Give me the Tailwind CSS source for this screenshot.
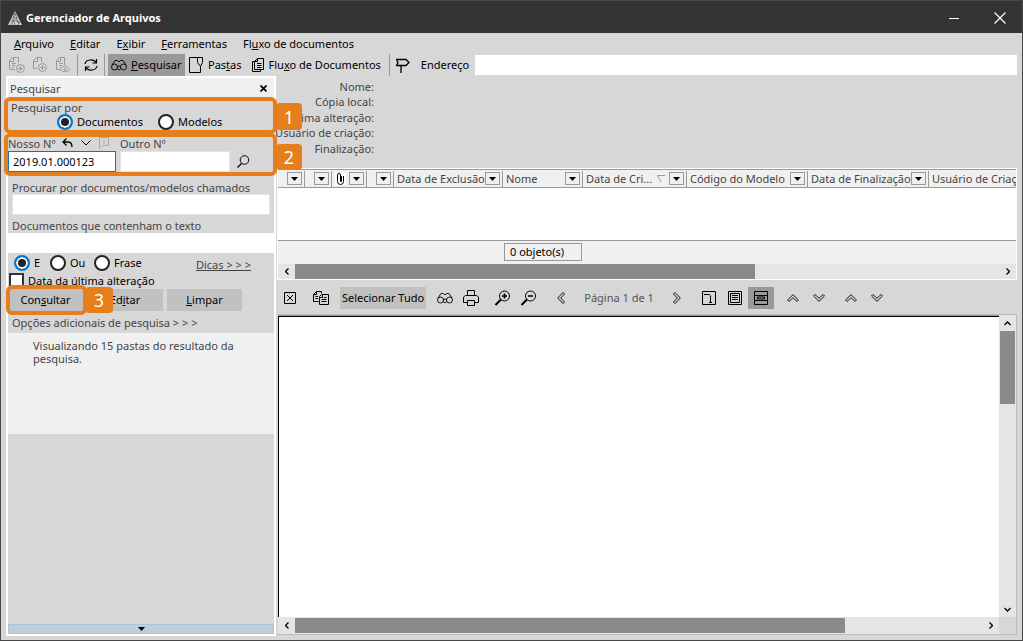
<!DOCTYPE html>
<html lang="pt-BR">
<head>
<meta charset="utf-8">
<title>Gerenciador de Arquivos</title>
<script src="https://cdn.jsdelivr.net/npm/@tailwindcss/browser@4"></script>
</head>
<body class="flex h-screen flex-col overflow-hidden border border-[#484848] bg-[#d7d7d7] font-['Noto_Sans',sans-serif] text-[11px] leading-4 text-black">
<svg class="hidden" aria-hidden="true">
  <symbol id="bino" viewBox="0 0 16 12"><g fill="none" stroke="currentColor" stroke-width=".9"><circle cx="3.500" cy="8" r="3"/><circle cx="12.500" cy="8" r="3"/><path d="M6.500 8.500a1.500 1.500 0 0 1 3 0M6.500 9.500a1.500 1.200 0 0 0 3 0M1 6l3-4.500h2.500L8 3l1.500-1.500H12L15 6"/></g></symbol>
  <symbol id="docs" viewBox="0 0 16 14"><path fill="none" stroke="currentColor" d="M5.500 10.500H.5v-7l3-3H8.500v2M3.500.5v3h-3M2.500 5.500H5M2.500 7.500H5M6.500 5.500l2-2H15.500v10H6.500zM9.500 3.500v3h-3M8.500 8.500h5M8.500 10.500h5M11 6.500h2.500"/></symbol>
  <symbol id="flow" viewBox="0 0 12 14"><path fill="none" stroke="currentColor" d="M2.500 3.500h-2v10h8v-2M5.500.5h6v11h-9v-8zM5.500.5v3h-3M5 5.500h4.500M5 7.500h4.500M5 9.500h4.500"/></symbol>
  <symbol id="adddoc" viewBox="0 0 16 16"><g fill="none" stroke="currentColor"><path d="M6 12.500H.5v-9l3-3h6V6M4.500.5v4h-4M3 6.500h4M3 8.500h3M3 10.500h2M11.500 9v5M9 11.500h5"/><circle cx="11.500" cy="11.500" r="4"/></g></symbol>
  <symbol id="addpage" viewBox="0 0 16 16"><g fill="none" stroke="currentColor"><path d="M5 11.500H1.500v-8l3-3h5V5M5.500.5v4h-4M10.500 8v5M8 10.500h5"/><circle cx="10.500" cy="10.500" r="4"/></g></symbol>
  <symbol id="viewdoc" viewBox="0 0 16 16"><g fill="none" stroke="currentColor"><path d="M5 12.500H1.500v-9l3-3h5V8M5.500.5v4h-4M4 6.500h4M4 8.500h3M5 12.500c2-4 7-4 10 0c-3 3-7 3-10 0z"/><circle cx="10" cy="12.500" r="1"/></g></symbol>
  <symbol id="lens" viewBox="0 0 16 16"><g fill="none" stroke="currentColor"><circle cx="9.500" cy="6" r="5"/><path stroke-width="2" d="M6 9.500L.5 15"/></g></symbol>
  <symbol id="up" viewBox="0 0 12 8"><path fill="none" stroke="currentColor" stroke-width=".9" d="M.5 6L6 .7L11.500 6L10 7.500L6 3.700L2 7.500z"/></symbol>
  <symbol id="down" viewBox="0 0 12 8"><path fill="none" stroke="currentColor" stroke-width=".9" d="M.5 2L6 7.300L11.500 2L10 .5L6 4.300L2 .5z"/></symbol>
  <symbol id="drop" viewBox="0 0 7 4"><path fill="currentColor" d="M0 0h7L3.500 4z"/></symbol>
</svg>

<header class="flex h-8 shrink-0 items-center bg-[#333] pt-[2px] pl-[7px] text-white">
  <svg class="size-[14px]" viewBox="0 0 14 14"><path fill="#d0d0d0" d="M7 0L14 14H0z"/><path stroke="#333" stroke-width=".6" fill="none" d="M7 2L5 8l2 6M7 2l3 9M3 10l4-1 5 3M5 6l4 2M3 14l2-4M10 14l1-4"/></svg>
  <h1 class="ml-1 flex-1 font-bold">Gerenciador de Arquivos</h1>
  <button class="flex h-8 w-[46px] items-center justify-center" aria-label="Minimizar"><span class="h-px w-[10px] bg-white"></span></button>
  <button class="flex h-8 w-[45px] items-center justify-center" aria-label="Fechar"><svg class="size-3" viewBox="0 0 12 12"><path stroke="#fff" stroke-width="1.200" d="M.5.5l11 11M11.500.5l-11 11"/></svg></button>
</header>

<nav class="flex h-[21px] shrink-0 items-center gap-4 pl-[13px]">
  <a href="#"><u>A</u>rquivo</a><a href="#"><u>E</u>ditar</a><a href="#">E<u>x</u>ibir</a><a href="#"><u>F</u>erramentas</a><a href="#">Fl<u>u</u>xo de documentos</a>
</nav>

<div class="flex h-[22px] shrink-0 items-center pr-[5px]">
  <div class="flex gap-[7px] pl-2 text-[#999]">
    <button aria-label="Adicionar documento"><svg class="size-4"><use href="#adddoc"/></svg></button>
    <button aria-label="Adicionar página"><svg class="size-4"><use href="#addpage"/></svg></button>
    <button aria-label="Visualizar documento"><svg class="size-4"><use href="#viewdoc"/></svg></button>
  </div>
  <div class="ml-[6px] flex h-full w-[28px] items-center justify-center border-x border-[#999]">
    <button aria-label="Atualizar"><svg class="h-3 w-[14px]" viewBox="0 0 14 12"><path fill="none" stroke="#000" stroke-width="1.200" d="M1 5C2 0 9 0 12 3M12.500 0v4h-4M13 7c-1 5-8 5-11 2M1.500 12V8h4"/></svg></button>
  </div>
  <button class="ml-[3px] flex h-full w-[77px] items-center gap-1 bg-[#999] pl-[3px]"><svg class="h-3 w-4 shrink-0"><use href="#bino"/></svg><span><u>P</u>esquisar</span></button>
  <button class="ml-1 flex items-center gap-[5px]"><svg class="h-4 w-[14px]" viewBox="0 0 14 16"><path fill="none" stroke="#000" d="M8.500.5h-8v15h11v-6M8.500.5h5v5l-2 4-3-4z"/></svg><span>Pas<u>t</u>as</span></button>
  <button class="ml-[10px] flex items-center gap-[5px]"><svg class="h-[14px] w-3"><use href="#flow"/></svg><span>Flu<u>x</u>o de Documentos</span></button>
  <div class="ml-2 flex h-full flex-1 items-center border-l border-[#999] pl-[6px]">
    <svg class="h-[15px] w-[14px]" viewBox="0 0 14 15"><path fill="none" stroke="#000" stroke-width="1.300" d="M5 15V7.500M.6 1.500H10l3 3-3 3H.6l1.400-3z"/></svg>
    <label for="end" class="mr-[6px] ml-[11px]">Endereço</label>
    <input id="end" class="h-5 min-w-0 flex-1 bg-white px-1 outline-none">
  </div>
</div>

<main class="flex min-h-0 flex-1 pr-[5px] pl-[5px] text-[#444]">
  <aside class="mb-1 flex w-[270px] shrink-0 flex-col border-2 border-white">
    <div class="flex h-5 shrink-0 items-center justify-between bg-[#f0f0f0] pt-px pr-[7px] pl-[2px]"><h2>Pesquisar</h2><button aria-label="Fechar painel"><svg class="size-[7px]" viewBox="0 0 7 7"><path stroke="#000" stroke-width="1.700" d="M.5.5l6 6M6.500.5l-6 6"/></svg></button></div>

    <div role="radiogroup" aria-labelledby="por" class="relative h-9 shrink-0 pt-[2px] pl-[3px] text-black">
      <p id="por" class="h-[14px] text-[#444]">Pesquisar por</p>
      <div class="flex pl-[46px]">
        <label class="flex w-[101px] items-center gap-1"><input type="radio" name="tipo" checked class="size-4 appearance-none rounded-full border-2 border-[#222] bg-white checked:border-[#0078d7] checked:bg-[#222] checked:shadow-[inset_0_0_0_2px_white]">Documentos</label>
        <label class="flex items-center gap-1"><input type="radio" name="tipo" class="size-4 appearance-none rounded-full border-2 border-[#222] bg-white checked:border-[#0078d7] checked:bg-[#222] checked:shadow-[inset_0_0_0_2px_white]">Modelos</label>
      </div>
      <span class="absolute -top-px -right-[3px] bottom-0 -left-1 z-10 rounded-md border-4 border-[#e67e1b]"></span>
      <span class="absolute top-[5px] left-[268px] z-10 flex h-[27px] w-[26px] items-center justify-center rounded-sm bg-[#e67e1b] text-lg text-white">1</span>
    </div>

    <section class="relative h-[42px] shrink-0">
      <div class="flex h-[17px] items-center">
        <label for="nosso" class="w-[54px] pt-[2px]">Nosso Nº</label>
        <svg class="mr-2 h-[10px] w-[11px]" viewBox="0 0 11 10"><path fill="none" stroke="#000" stroke-width="1.300" d="M4.500.5L1 4l3.500 3.500M1 4h5c3 0 4 2 4 5"/></svg>
        <svg class="mr-2 h-[6px] w-[10px]" viewBox="0 0 10 6"><path fill="none" stroke="#000" d="M.5.5L5 5L9.500.5"/></svg>
        <svg class="mr-[11px] h-3 w-[10px]" viewBox="0 0 10 12"><path fill="none" stroke="#aaa" d="M.5.5h9v8h-6l-3 3zM5 2v1.500M5 4.500V7"/></svg>
        <label for="outro" class="pt-[2px]">Outro Nº</label>
      </div>
      <div class="flex">
        <input id="nosso" value="2019.01.000123" class="h-[21px] w-[108px] border border-[#0078d7] bg-white pl-1 text-[11px] text-black outline-none">
        <input id="outro" class="ml-1 h-[21px] w-[110px] border border-[#e5e5e5] bg-white px-1 outline-none">
        <button class="ml-[7px] text-black" aria-label="Procurar"><svg class="size-[13px]" viewBox="0 0 13 13"><circle cx="7.500" cy="5" r="4.300" fill="none" stroke="#000"/><path stroke="#000" stroke-width="1.300" d="M4.500 8.500L.5 12.500"/></svg></button>
      </div>
      <span class="absolute -top-px -right-[3px] bottom-0 -left-1 z-10 rounded-md border-4 border-[#e67e1b]"></span>
      <span class="absolute top-[10px] left-[268px] z-10 flex h-[26px] w-[26px] items-center justify-center rounded-sm bg-[#e67e1b] text-lg text-white">2</span>
    </section>

    <div class="flex flex-col pt-1"><label for="nome" class="h-[14px] pl-1">Procurar por documentos/modelos chamados</label><input id="nome" class="mr-1 ml-1 h-[21px] border border-[#e5e5e5] bg-white px-1 outline-none"></div>
    <div class="flex flex-col pt-[3px]"><label for="texto" class="h-[15px] pl-1">Documentos que contenham o texto</label><input id="texto" class="h-5 bg-white px-1 outline-none"></div>

    <div class="flex h-[19px] items-center pl-[6px] text-black">
      <label class="flex w-9 items-center gap-1"><input type="radio" name="modo" checked class="size-4 appearance-none rounded-full border-2 border-[#222] bg-white checked:border-[#0078d7] checked:bg-[#222] checked:shadow-[inset_0_0_0_2px_white]">E</label>
      <label class="flex w-11 items-center gap-1"><input type="radio" name="modo" class="size-4 appearance-none rounded-full border-2 border-[#222] bg-white checked:border-[#0078d7] checked:bg-[#222] checked:shadow-[inset_0_0_0_2px_white]">Ou</label>
      <label class="flex flex-1 items-center gap-1"><input type="radio" name="modo" class="size-4 appearance-none rounded-full border-2 border-[#222] bg-white checked:border-[#0078d7] checked:bg-[#222] checked:shadow-[inset_0_0_0_2px_white]">Frase</label>
      <a href="#" class="mr-[23px] pt-1 text-[#444] underline">Dicas &gt; &gt; &gt;</a>
    </div>
    <label class="flex h-[17px] items-center gap-1 pl-px text-black"><input type="checkbox" class="size-[15px] appearance-none border-2 border-[#333] bg-white checked:bg-[#333]">Data da última alteração</label>

    <div class="flex h-[22px] gap-1 text-black">
      <div class="relative flex">
        <button class="w-[75px] bg-[#c1c1c1]">Con<u>s</u>ultar</button>
        <span class="absolute -top-1 -right-1 -bottom-1 -left-[2px] z-10 rounded-md border-4 border-[#e67e1b]"></span>
        <span class="absolute -top-[2px] left-[77px] z-10 flex h-[26px] w-7 items-center justify-center rounded-sm bg-[#e67e1b] text-lg text-white">3</span>
      </div>
      <button class="w-[76px] bg-[#c1c1c1]">Ed<u>i</u>tar</button>
      <button class="w-[75px] bg-[#c1c1c1]"><u>L</u>impar</button>
    </div>
    <a href="#" class="h-[22px] pt-1 pl-1">Opções adicionais de pesquisa &gt; &gt; &gt;</a>
    <p class="h-[101px] bg-[#f0f0f0] pt-[6px] pr-9 pl-[25px] leading-[13px]">Visualizando 15 pastas do resultado da pesquisa.</p>
    <button class="mt-auto flex h-[10px] shrink-0 items-center justify-center border border-[#a8c4dc] bg-[#c0cdd9] text-black" aria-label="Mais"><svg class="h-1 w-[7px]"><use href="#drop"/></svg></button>
  </aside>

  <div class="ml-px flex min-w-0 flex-1 flex-col">
    <dl class="flex h-[92px] w-[97px] shrink-0 flex-col items-end pt-[3px] whitespace-nowrap">
      <dt class="h-[15px]">Nome:</dt><dt class="h-4">Cópia local:</dt><dt class="h-[15px]">Última alteração:</dt><dt class="h-4">Usuário de criação:</dt><dt class="h-4">Finalização:</dt>
    </dl>

    <section class="h-[112px] shrink-0 overflow-hidden border border-white bg-white">
      <div class="overflow-hidden">
      <table class="w-[860px] table-fixed border-collapse text-left">
        <colgroup><col class="w-[27px]"><col class="w-[27px]"><col class="w-[35px]"><col class="w-[27px]"><col class="w-[109px]"><col class="w-[80px]"><col class="w-[104px]"><col class="w-[121px]"><col class="w-[121px]"><col></colgroup>
        <thead><tr class="h-[18px] border-y border-[#999] bg-[#f0f0f0] whitespace-nowrap [&_button]:flex [&_button]:h-[13px] [&_button]:w-[15px] [&_button]:shrink-0 [&_button]:items-center [&_button]:justify-center [&_button]:border [&_button]:border-[#999] [&_button]:text-black [&_div]:flex [&_div]:h-4 [&_div]:items-center [&_div]:justify-between [&_div]:border-r [&_div]:border-[#999] [&_div]:pr-[2px] [&_div]:pl-[3px] [&_th]:overflow-hidden [&_th]:p-0 [&_th]:font-normal">
          <th><div><span></span><button aria-label="Filtrar"><svg class="h-1 w-[7px]"><use href="#drop"/></svg></button></div></th>
          <th><div><span></span><button aria-label="Filtrar"><svg class="h-1 w-[7px]"><use href="#drop"/></svg></button></div></th>
          <th><div><svg class="h-3 w-[11px] bg-white" viewBox="0 0 11 12"><path fill="none" stroke="#000" d="M2.500 3v5.500a3 3 0 0 0 6 0V3M2.500 3V2a1.500 1.500 0 0 1 3 0v6.500M5.500 8.500a1 1 0 0 0 1 0V3"/></svg><button aria-label="Filtrar"><svg class="h-1 w-[7px]"><use href="#drop"/></svg></button></div></th>
          <th><div><span></span><button aria-label="Filtrar"><svg class="h-1 w-[7px]"><use href="#drop"/></svg></button></div></th>
          <th><div>Data de Exclusão<button aria-label="Filtrar"><svg class="h-1 w-[7px]"><use href="#drop"/></svg></button></div></th>
          <th><div>Nome<button aria-label="Filtrar"><svg class="h-1 w-[7px]"><use href="#drop"/></svg></button></div></th>
          <th><div>Data de Cri...<svg class="h-[7px] w-2" viewBox="0 0 8 7"><path fill="none" stroke="#999" d="M8 .5H.5L4 7"/></svg><button aria-label="Filtrar"><svg class="h-1 w-[7px]"><use href="#drop"/></svg></button></div></th>
          <th><div>Código do Modelo<button aria-label="Filtrar"><svg class="h-1 w-[7px]"><use href="#drop"/></svg></button></div></th>
          <th><div>Data de Finalização<button aria-label="Filtrar"><svg class="h-1 w-[7px]"><use href="#drop"/></svg></button></div></th>
          <th><div>Usuário de Criação<button aria-label="Filtrar"><svg class="h-1 w-[7px]"><use href="#drop"/></svg></button></div></th>
        </tr></thead>
      </table>
      </div>
      <div class="h-[52px]"></div>
      <div class="flex h-6 items-start border-t border-[#999] bg-[#f0f0f0] pt-[2px] pl-[226px]"><output class="h-[18px] w-[78px] border border-[#999] pl-[5px] text-black">0 objeto(s)</output></div>
      <div class="flex h-[15px] items-center bg-[#e5e5e5]">
        <button class="flex w-[17px] justify-center" aria-label="Esquerda"><svg class="h-[7px] w-1" viewBox="0 0 4 7"><path fill="none" stroke="#000" stroke-width="1.300" d="M3.500.5l-3 3 3 3"/></svg></button>
        <div class="h-full flex-1"><div class="h-full w-[65.3%] bg-[#8a8a8a]"></div></div>
        <button class="flex w-[17px] justify-center" aria-label="Direita"><svg class="h-[7px] w-1" viewBox="0 0 4 7"><path fill="none" stroke="#000" stroke-width="1.300" d="M.5.5l3 3-3 3"/></svg></button>
      </div>
    </section>

    <div class="flex h-[34px] shrink-0 items-center gap-[6px] pt-[2px] text-black [&_button]:flex [&_button]:h-[22px] [&_button]:w-[26px] [&_button]:items-center [&_button]:justify-center">
      <div class="-mr-px"><button aria-label="Fechar"><svg class="size-3" viewBox="0 0 12 12"><path fill="none" stroke="#000" d="M.5.5h11v11H.5zM3 3l6 6M9 3l-6 6"/></svg></button></div>
      <button aria-label="Copiar"><svg class="h-[14px] w-4"><use href="#docs"/></svg></button>
      <div class="w-[86px] bg-[#c1c1c1] [&_button]:w-full!"><button class="whitespace-nowrap">Selecionar Tudo</button></div>
      <div class="flex"><button aria-label="Localizar"><svg class="h-3 w-4"><use href="#bino"/></svg></button>
      <button aria-label="Imprimir"><svg class="size-4" viewBox="0 0 16 16"><path fill="none" stroke="#000" d="M4.500 5V.5h7V5M4 12.500H.5V7l2-1.500h11l2 1.500v5.500H12M4.500 10.500h7v5h-7z"/></svg></button></div>
      <div class="flex"><button aria-label="Ampliar"><svg class="size-4" viewBox="0 0 16 16"><use href="#lens"/><path stroke="#000" stroke-width="1.700" d="M7 6h5M9.500 3.500v5"/></svg></button>
      <button aria-label="Reduzir"><svg class="size-4" viewBox="0 0 16 16"><use href="#lens"/><path stroke="#000" stroke-width="1.500" d="M7 6h5"/></svg></button></div>
      <div class="flex items-center"><button aria-label="Anterior"><svg class="h-3 w-2 overflow-visible" viewBox="0 0 8 12"><path fill="none" stroke="#000" stroke-width=".9" d="M6 .5L.7 6L6 11.500L7.500 10L3.700 6L7.500 2z"/></svg></button>
      <span class="w-[90px] text-center whitespace-nowrap text-[#555]">Página 1 de 1</span>
      <button aria-label="Próxima"><svg class="h-3 w-2 overflow-visible" viewBox="0 0 8 12"><path fill="none" stroke="#000" stroke-width=".9" d="M2 .5L7.300 6L2 11.500L.5 10L4.300 6L.5 2z"/></svg></button></div>
      <div class="flex"><button aria-label="Largura da página"><svg class="size-[14px]" viewBox="0 0 14 14"><path fill="none" stroke="#000" d="M.5.5h13v13H.5zM2 3.500h5.500l1 1v7M7 11.500h3"/></svg></button>
      <button aria-label="Página inteira"><svg class="size-[14px]" viewBox="0 0 14 14"><path fill="none" stroke="#000" d="M.5.5h13v13H.5zM2.500 2.500h9v9h-9zM4 4.500h6M4 6.500h6M4 8.500h6"/></svg></button>
      <button class="bg-[#999]" aria-label="Contínuo"><svg class="size-[14px]" viewBox="0 0 14 14"><path fill="none" stroke="#000" d="M.5.5h13v13H.5zM.5 4.500h13M.5 9.500h13M3.500 6h7v2h-7z"/></svg></button></div>
      <div class="flex"><button aria-label="Subir"><svg class="h-2 w-3"><use href="#up"/></svg></button><button aria-label="Descer"><svg class="h-2 w-3"><use href="#down"/></svg></button></div>
      <div class="flex"><button aria-label="Primeiro"><svg class="h-2 w-3"><use href="#up"/></svg></button><button aria-label="Último"><svg class="h-2 w-3"><use href="#down"/></svg></button></div>
    </div>

    <section class="mb-[5px] grid min-h-0 flex-1 grid-cols-[1fr_17px] grid-rows-[1fr_17px] border-t border-r border-b border-[#bbb] pl-px">
      <div class="border-t border-[#999] bg-white"><div class="h-full border-t border-l border-black"></div></div>
      <div class="flex flex-col items-center bg-[#e5e5e5]">
        <button class="flex h-4 items-center" aria-label="Acima"><svg class="h-[5px] w-[7px]" viewBox="0 0 7 5"><path fill="none" stroke="#000" stroke-width="1.300" d="M.5 4l3-3 3 3"/></svg></button>
        <div class="w-[15px] flex-1"><div class="h-[27%] bg-[#8a8a8a]"></div></div>
        <button class="flex h-4 items-center" aria-label="Abaixo"><svg class="h-[5px] w-[7px]" viewBox="0 0 7 5"><path fill="none" stroke="#000" stroke-width="1.300" d="M.5 1l3 3 3-3"/></svg></button>
      </div>
      <div class="flex items-center bg-[#e5e5e5]">
        <button class="flex w-[17px] justify-center" aria-label="Esquerda"><svg class="h-[7px] w-1" viewBox="0 0 4 7"><path fill="none" stroke="#000" stroke-width="1.300" d="M3.500.5l-3 3 3 3"/></svg></button>
        <div class="h-[15px] flex-1"><div class="h-full w-[80%] bg-[#8a8a8a]"></div></div>
        <button class="flex w-[17px] justify-center" aria-label="Direita"><svg class="h-[7px] w-1" viewBox="0 0 4 7"><path fill="none" stroke="#000" stroke-width="1.300" d="M.5.5l3 3-3 3"/></svg></button>
      </div>
      <div></div>
    </section>
  </div>
</main>
</body>
</html>
